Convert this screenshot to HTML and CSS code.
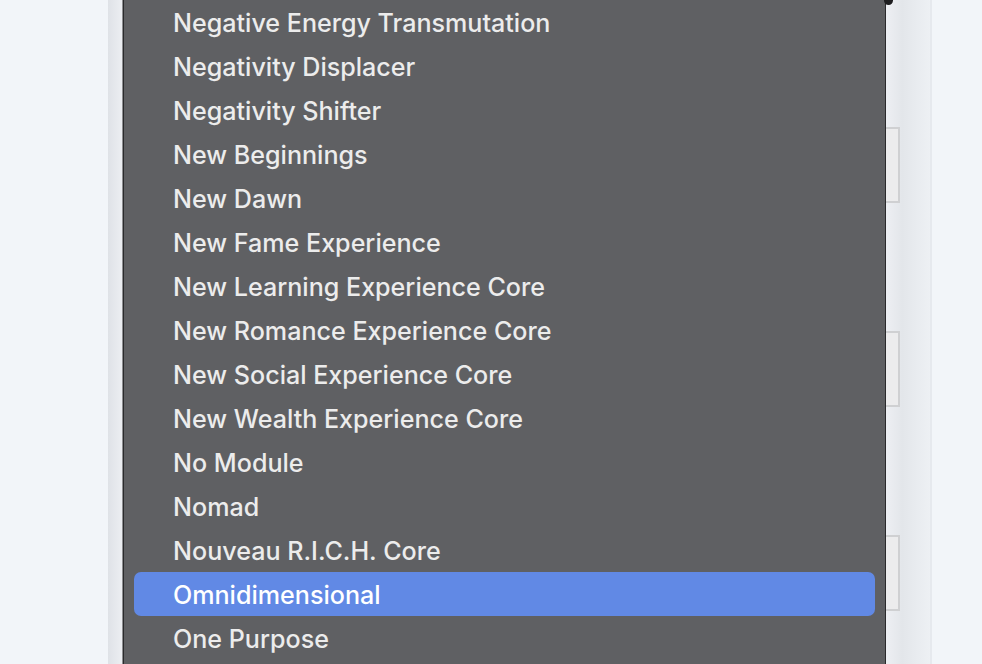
FILE: index.html
```html
<!DOCTYPE html>
<html>
<head>
<meta charset="utf-8">
<link rel="stylesheet" href="styles.css">
</head>
<body>
<div class="page">
  <div class="panel">
    <div class="field"></div>
    <div class="field"></div>
    <div class="field"></div>
  </div>
</div>
<div class="menu">
  <div class="item">Negative Energy Transmutation</div>
  <div class="item">Negativity Displacer</div>
  <div class="item">Negativity Shifter</div>
  <div class="item">New Beginnings</div>
  <div class="item">New Dawn</div>
  <div class="item">New Fame Experience</div>
  <div class="item">New Learning Experience Core</div>
  <div class="item">New Romance Experience Core</div>
  <div class="item">New Social Experience Core</div>
  <div class="item">New Wealth Experience Core</div>
  <div class="item">No Module</div>
  <div class="item">Nomad</div>
  <div class="item">Nouveau R.I.C.H. Core</div>
  <div class="item selected">Omnidimensional</div>
  <div class="item">One Purpose</div>
</div>
<div class="corner"></div>
</body>
</html>
```
FILE: styles.css
```css
html, body {
  margin: 0;
  padding: 0;
  height: 100%;
  overflow: hidden;
}
body {
  background: #f2f5f9;
  font-family: Inter, "Noto Sans", sans-serif;
}
.page {
  padding-left: 108px;
  height: 100%;
}
.panel {
  width: 824px;
  height: 100%;
  box-sizing: border-box;
  background: linear-gradient(90deg, #dfe2e7 0px, #eceef2 14px, #eceef2 780px, #e3e6ea 794px, #e9ecf0 810px, #eef1f4 824px);
  border-right: 2px solid #e6e9ee;
  padding: 127px 30px 0 40px;
  display: flex;
  flex-direction: column;
  gap: 128px;
}
.field {
  height: 76px;
  box-sizing: border-box;
  border: 2px solid #cfd0d2;
  background: #ececed;
  flex: none;
}
.menu {
  position: absolute;
  left: 123px;
  top: -1px;
  width: 763px;
  height: 680px;
  box-sizing: border-box;
  background: #5f6063;
  border-left: 1px solid #2a2a2c;
  border-right: 1px solid #2a2a2c;
  padding: 1px 10px 0 10px;
  box-shadow: -1px 0 0 #8c8d90;
}
.corner {
  position: absolute;
  left: 884px;
  top: -4px;
  width: 9px;
  height: 9px;
  border-radius: 50%;
  background: #1e1e20;
}
.item {
  height: 44px;
  line-height: 46px;
  padding-left: 39px;
  font-size: 25.1px;
  font-weight: 500;
  color: #ececec;
  white-space: nowrap;
  border-radius: 7px;
}
.item.selected {
  background: #6189e5;
  color: #ffffff;
}
```
